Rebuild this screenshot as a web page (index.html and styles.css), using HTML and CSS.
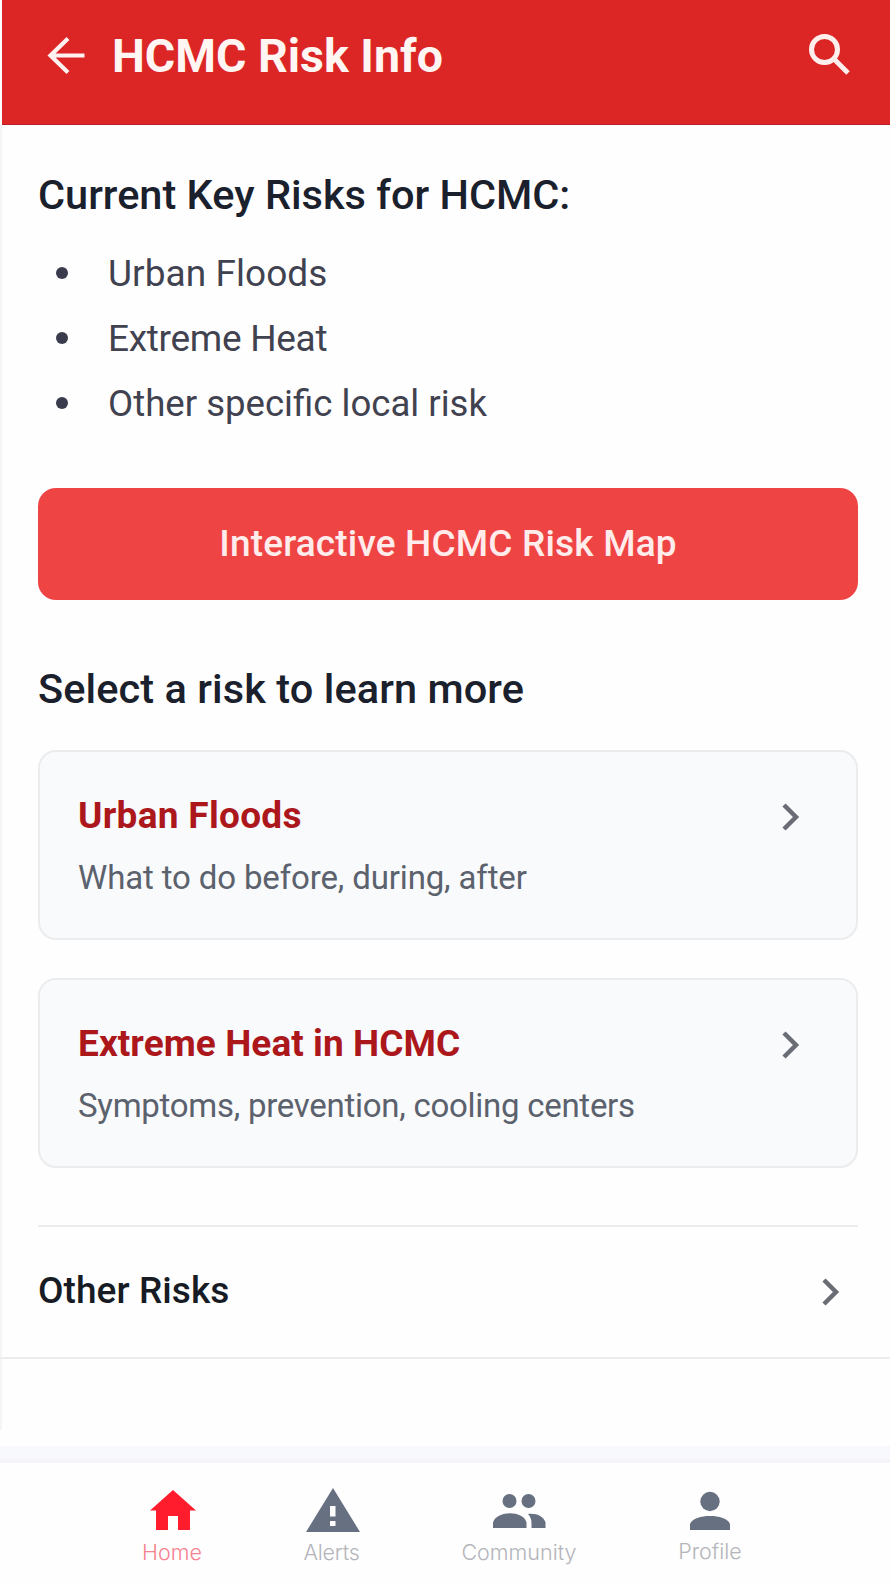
FILE: index.html
```html
<!DOCTYPE html>
<html lang="en">
<head>
<meta charset="utf-8">
<title>HCMC Risk Info</title>
<link rel="stylesheet" href="styles.css">
</head>
<body>
<div class="screen">
  <header class="topbar">
    <svg class="back" width="40" height="40" viewBox="0 0 40 40"><path d="M38.500 20.500H4.500M22 3.500L4.500 20.500L22 37.500"/></svg>
    <h1 class="title">HCMC Risk Info</h1>
    <svg class="search" width="44" height="44" viewBox="0 0 44 44"><circle cx="16.500" cy="16.500" r="13"/><path d="M26 26L40 40"/></svg>
  </header>
  <main class="content">
    <h2 class="heading heading-key">Current Key Risks for HCMC:</h2>
    <ul class="risks">
      <li class="risk-floods"><span>Urban Floods</span></li>
      <li class="risk-heat"><span>Extreme Heat</span></li>
      <li class="risk-local"><span>Other specific local risk</span></li>
    </ul>
    <button class="map-button"><span>Interactive HCMC Risk Map</span></button>
    <h2 class="heading heading-select">Select a risk to learn more</h2>
    <section class="cards">
      <article class="card">
        <div>
          <h3 class="card-title card-title-floods">Urban Floods</h3>
          <p class="card-text">What to do before, during, after</p>
        </div>
        <svg class="chevron" width="20" height="32" viewBox="0 0 20 32"><path d="M3 4L15 16L3 28"/></svg>
      </article>
      <article class="card">
        <div>
          <h3 class="card-title card-title-heat">Extreme Heat in HCMC</h3>
          <p class="card-text card-text-heat">Symptoms, prevention, cooling centers</p>
        </div>
        <svg class="chevron" width="20" height="32" viewBox="0 0 20 32"><path d="M3 4L15 16L3 28"/></svg>
      </article>
    </section>
    <div class="other">
      <span class="other-label">Other Risks</span>
      <svg class="chevron" width="20" height="32" viewBox="0 0 20 32"><path d="M3 4L15 16L3 28"/></svg>
    </div>
  </main>
  <div class="spacer"></div>
  <nav class="tabs">
    <a class="tab tab-home">
      <svg width="46" height="44" viewBox="0 0 46 44"><path d="M23 2L46 22.500H40V42H28V28H18V42H6V22.500H0Z"/></svg>
      <span>Home</span>
    </a>
    <a class="tab tab-alerts">
      <svg width="54" height="44" viewBox="0 0 54 44"><path fill-rule="evenodd" d="M27 0L54 44H0ZM24 18V28.500H29.500V18ZM24 33V38H29.500V33Z"/></svg>
      <span>Alerts</span>
    </a>
    <a class="tab tab-community">
      <svg width="53" height="44" viewBox="0 0 53 44"><circle cx="16.500" cy="13" r="7"/><circle cx="35.500" cy="13" r="7"/><path d="M0 40V34.500C2 28 10 25.300 17 25.300S32 28 33.500 34.500V40ZM35 26C44 25 50 28.500 52.500 34V40H38.500V36C38.500 32 38 29.500 35 26Z"/></svg>
      <span>Community</span>
    </a>
    <a class="tab tab-profile">
      <svg width="40" height="44" viewBox="0 0 40 44"><circle cx="20" cy="13.500" r="9.700"/><path d="M0 42V36C2 30.500 11 28 20 28S38 30.500 40 36V42Z"/></svg>
      <span>Profile</span>
    </a>
  </nav>
</div>
</body>
</html>
```
FILE: styles.css
```css
* { box-sizing: border-box; margin: 0; padding: 0; }

body {
  background: #fefefe;
  font-family: Roboto, "Liberation Sans", sans-serif;
}

.screen {
  display: flex;
  flex-direction: column;
  width: 890px;
  height: 1584px;
  overflow: hidden;
}

.topbar {
  display: flex;
  align-items: center;
  height: 125px;
  margin-left: 2px;
  padding: 0 38px 15px 44px;
  background: #dc2626;
  border-bottom: 1px solid #b9202a;
}

.back, .search, .chevron { fill: none; flex: none; }
.back { stroke: #fff2f0; stroke-width: 4.200; }
.search { stroke: #ffefec; stroke-width: 5; margin-left: auto; }
.chevron { stroke: #6b6d76; stroke-width: 4.500; }

.title {
  margin: 2px 0 0 26px;
  color: #fff5f3;
  font-size: 46.500px;
  font-weight: 700;
  line-height: 54px;
  white-space: nowrap;
}

.content {
  height: 1305px;
  border-left: 2px solid #f5f5f6;
  padding-top: 45px;
}

.heading {
  margin-left: 36px;
  color: #1a202c;
  font-size: 41.500px;
  font-weight: 500;
  line-height: 50px;
  white-space: nowrap;
}

.risks {
  display: flex;
  flex-direction: column;
  margin-top: 21px;
  list-style: none;
}

.risks li {
  display: flex;
  align-items: center;
  height: 65px;
  padding-left: 54px;
  color: #414250;
  font-size: 37px;
  line-height: 65px;
}

.risks li::before {
  content: "";
  width: 12px;
  height: 12px;
  margin: -1px 40px 0 0;
  border-radius: 50%;
  background: #3a3c4d;
}

.risks .risk-floods { letter-spacing: 0.06px; }
.risks .risk-heat { letter-spacing: -0.3px; }
.risks .risk-local { font-size: 36.600px; }

.map-button {
  display: block;
  width: 820px;
  height: 112px;
  margin: 52px 0 0 36px;
  border: 0;
  border-radius: 18px;
  background: #ef4444;
  color: #ffeceb;
  font: 500 37px/112px Roboto, "Liberation Sans", sans-serif;
  letter-spacing: 0.17px;
  padding-bottom: 2px;
}

.heading-select {
  margin-top: 64px;
  letter-spacing: 0.08px;
}

.cards {
  display: flex;
  flex-direction: column;
  gap: 38px;
  margin: 36px 32px 0 36px;
}

.card {
  display: flex;
  justify-content: space-between;
  width: 820px;
  height: 190px;
  padding: 38px 55px 0 38px;
  border: 2px solid #ebecee;
  border-radius: 18px;
  background: #f9fafc;
}

.card .chevron { margin-top: 11px; }

.card-title {
  color: #ac171c;
  font-size: 37px;
  font-weight: 700;
  line-height: 52px;
  white-space: nowrap;
}

.card-title-floods { letter-spacing: 0.3px; }
.card-title-heat { letter-spacing: 0.07px; }

.card-text {
  margin-top: 13px;
  color: #5b626d;
  font-size: 33px;
  line-height: 46px;
  letter-spacing: -0.14px;
  white-space: nowrap;
}

.card-text-heat { letter-spacing: -0.27px; }

.other {
  display: flex;
  align-items: center;
  justify-content: space-between;
  height: 134px;
  margin: 57px 0 0 -2px;
  padding: 0 49px 0 38px;
  border-bottom: 2px solid #ececed;
  background: linear-gradient(#ebebec, #ebebec) 38px 0 / 820px 2px no-repeat;
}

.other .chevron { margin-top: 1px; }

.other-label {
  margin-top: -1px;
  color: #171b24;
  font-size: 37px;
  font-weight: 500;
  letter-spacing: 0.08px;
}

.spacer {
  height: 17px;
  margin-top: 16px;
  background: #f7f9fd;
  border-bottom: 4px solid #f4f4f9;
}

.tabs {
  display: flex;
  align-items: flex-start;
  padding-top: 25px;
}

.tab {
  display: flex;
  flex-direction: column;
  align-items: center;
  width: 160px;
  color: #b3b5ba;
  font: 300 21.500px/28px Inter, sans-serif;
}

.tab svg { fill: #667080; }
.tab span { margin-top: 6px; }
.tab-home { margin-left: 93px; color: #f58290; }
.tab-home span { margin-right: 2px; }
.tab-home svg { fill: #ff1d2d; }
.tab-alerts span { margin-right: 3px; letter-spacing: -0.2px; }
.tab-community { margin-left: 26px; }
.tab-profile { margin-left: 31px; }
.tab-profile span { margin-top: 5px; }
```
